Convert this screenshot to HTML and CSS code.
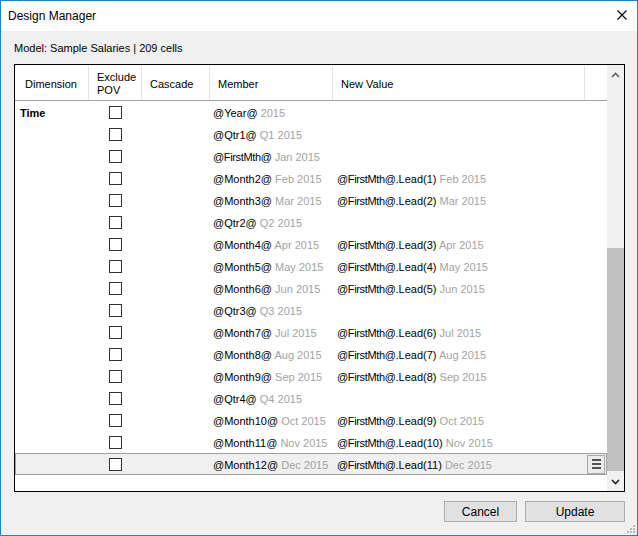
FILE: index.html
```html
<!DOCTYPE html>
<html>
<head>
<meta charset="utf-8">
<link rel="stylesheet" href="styles.css">
</head>
<body>
<div class="window">
  <div class="titlebar">
    <span class="title">Design Manager</span>
    <svg class="close" width="10" height="10" viewBox="0 0 10 10"><path d="M0.5 0.5L9.5 9.5M9.5 0.5L0.5 9.5" stroke="#000" stroke-width="1.1" fill="none"/></svg>
  </div>
  <div class="body">
    <div class="model">Model: Sample Salaries | 209 cells</div>
    <div class="gridbox">
      <div class="table">
        <div class="row head">
          <div class="hc c1">Dimension</div>
          <div class="hc c2">Exclude<br>POV</div>
          <div class="hc c3">Cascade</div>
          <div class="hc c4">Member</div>
          <div class="hc c5">New Value</div>
          <div class="hc c6"></div>
        </div>
        <div class="row"><div class="c1 dim">Time</div><div class="c2"><span class="cb"></span></div><div class="c3"></div><div class="c4">@Year@ <span class="g">2015</span></div><div class="c5"></div><div class="c6"></div></div>
        <div class="row"><div class="c1"></div><div class="c2"><span class="cb"></span></div><div class="c3"></div><div class="c4">@Qtr1@ <span class="g">Q1 2015</span></div><div class="c5"></div><div class="c6"></div></div>
        <div class="row"><div class="c1"></div><div class="c2"><span class="cb"></span></div><div class="c3"></div><div class="c4"><span class="fm">@FirstMth@</span> <span class="g">Jan 2015</span></div><div class="c5"></div><div class="c6"></div></div>
        <div class="row"><div class="c1"></div><div class="c2"><span class="cb"></span></div><div class="c3"></div><div class="c4">@Month2@ <span class="g">Feb 2015</span></div><div class="c5"><span class="fm">@FirstMth@</span>.Lead(1) <span class="g">Feb 2015</span></div><div class="c6"></div></div>
        <div class="row"><div class="c1"></div><div class="c2"><span class="cb"></span></div><div class="c3"></div><div class="c4">@Month3@ <span class="g">Mar 2015</span></div><div class="c5"><span class="fm">@FirstMth@</span>.Lead(2) <span class="g">Mar 2015</span></div><div class="c6"></div></div>
        <div class="row"><div class="c1"></div><div class="c2"><span class="cb"></span></div><div class="c3"></div><div class="c4">@Qtr2@ <span class="g">Q2 2015</span></div><div class="c5"></div><div class="c6"></div></div>
        <div class="row"><div class="c1"></div><div class="c2"><span class="cb"></span></div><div class="c3"></div><div class="c4">@Month4@ <span class="g">Apr 2015</span></div><div class="c5"><span class="fm">@FirstMth@</span>.Lead(3) <span class="g">Apr 2015</span></div><div class="c6"></div></div>
        <div class="row"><div class="c1"></div><div class="c2"><span class="cb"></span></div><div class="c3"></div><div class="c4">@Month5@ <span class="g">May 2015</span></div><div class="c5"><span class="fm">@FirstMth@</span>.Lead(4) <span class="g">May 2015</span></div><div class="c6"></div></div>
        <div class="row"><div class="c1"></div><div class="c2"><span class="cb"></span></div><div class="c3"></div><div class="c4">@Month6@ <span class="g">Jun 2015</span></div><div class="c5"><span class="fm">@FirstMth@</span>.Lead(5) <span class="g">Jun 2015</span></div><div class="c6"></div></div>
        <div class="row"><div class="c1"></div><div class="c2"><span class="cb"></span></div><div class="c3"></div><div class="c4">@Qtr3@ <span class="g">Q3 2015</span></div><div class="c5"></div><div class="c6"></div></div>
        <div class="row"><div class="c1"></div><div class="c2"><span class="cb"></span></div><div class="c3"></div><div class="c4">@Month7@ <span class="g">Jul 2015</span></div><div class="c5"><span class="fm">@FirstMth@</span>.Lead(6) <span class="g">Jul 2015</span></div><div class="c6"></div></div>
        <div class="row"><div class="c1"></div><div class="c2"><span class="cb"></span></div><div class="c3"></div><div class="c4">@Month8@ <span class="g">Aug 2015</span></div><div class="c5"><span class="fm">@FirstMth@</span>.Lead(7) <span class="g">Aug 2015</span></div><div class="c6"></div></div>
        <div class="row"><div class="c1"></div><div class="c2"><span class="cb"></span></div><div class="c3"></div><div class="c4">@Month9@ <span class="g">Sep 2015</span></div><div class="c5"><span class="fm">@FirstMth@</span>.Lead(8) <span class="g">Sep 2015</span></div><div class="c6"></div></div>
        <div class="row"><div class="c1"></div><div class="c2"><span class="cb"></span></div><div class="c3"></div><div class="c4">@Qtr4@ <span class="g">Q4 2015</span></div><div class="c5"></div><div class="c6"></div></div>
        <div class="row"><div class="c1"></div><div class="c2"><span class="cb"></span></div><div class="c3"></div><div class="c4">@Month10@ <span class="g">Oct 2015</span></div><div class="c5"><span class="fm">@FirstMth@</span>.Lead(9) <span class="g">Oct 2015</span></div><div class="c6"></div></div>
        <div class="row"><div class="c1"></div><div class="c2"><span class="cb"></span></div><div class="c3"></div><div class="c4">@Month11@ <span class="g">Nov 2015</span></div><div class="c5"><span class="fm">@FirstMth@</span>.Lead(10) <span class="g">Nov 2015</span></div><div class="c6"></div></div>
        <div class="row sel"><div class="c1"></div><div class="c2"><span class="cb"></span></div><div class="c3"></div><div class="c4">@Month12@ <span class="g">Dec 2015</span></div><div class="c5"><span class="fm">@FirstMth@</span>.Lead(11) <span class="g">Dec 2015</span></div><div class="c6"><span class="menubtn"><i></i><i></i><i></i></span></div></div>
      </div>
      <div class="scrollbar">
        <svg class="arrow" width="9" height="6" viewBox="0 0 9 6"><path d="M1 5L4.5 1.5L8 5" stroke="#606060" stroke-width="1.6" fill="none"/></svg>
        <div class="track"><div class="thumb"></div></div>
        <svg class="arrow" width="9" height="6" viewBox="0 0 9 6"><path d="M1 1L4.5 4.5L8 1" stroke="#202020" stroke-width="1.6" fill="none"/></svg>
      </div>
    </div>
    <div class="footer">
      <button class="btn cancel">Cancel</button>
      <button class="btn update">Update</button>
    </div>
  </div>
  <svg class="grip" width="10" height="10" viewBox="0 0 10 10">
    <rect x="7" y="1" width="2" height="2" fill="#b8b8b8"/>
    <rect x="4" y="4" width="2" height="2" fill="#b8b8b8"/>
    <rect x="7" y="4" width="2" height="2" fill="#b8b8b8"/>
    <rect x="1" y="7" width="2" height="2" fill="#b8b8b8"/>
    <rect x="4" y="7" width="2" height="2" fill="#b8b8b8"/>
    <rect x="7" y="7" width="2" height="2" fill="#b8b8b8"/>
  </svg>
</div>
</body>
</html>
```
FILE: styles.css
```css
* { box-sizing: border-box; }
html, body { margin: 0; padding: 0; }
body {
  width: 638px;
  height: 536px;
  overflow: hidden;
  font-family: "Liberation Sans", Arial, sans-serif;
  font-size: 11px;
  color: #000;
}
.window {
  position: relative;
  width: 638px;
  height: 536px;
  border: 1px solid #1883d7;
  background: #f0f0f0;
  display: flex;
  flex-direction: column;
}
.titlebar {
  height: 30px;
  background: #fff;
  display: flex;
  align-items: center;
  justify-content: space-between;
  padding: 0 10px 0 7px;
  flex: none;
}
.title {
  font-size: 12px;
  margin-top: -1px;
}
.close { margin-top: -2px; }
.body {
  padding: 0 12px 0 13px;
  display: flex;
  flex-direction: column;
}
.model {
  padding-top: 11px;
  height: 33px;
  line-height: 13px;
}
.gridbox {
  width: 611px;
  height: 428px;
  border: 1px solid #000;
  background: #fff;
  display: flex;
}
.table {
  width: 592px;
  display: flex;
  flex-direction: column;
}
.row {
  display: grid;
  grid-template-columns: 74px 53px 68px 123px 252px 22px;
  height: 22px;
  align-items: center;
  white-space: nowrap;
}
.row.head {
  height: 36px;
  border-bottom: 1px solid #a0a0a0;
  align-items: stretch;
}
.row.head .hc {
  border-right: 1px solid #e3e3e3;
  display: flex;
  align-items: center;
  justify-content: flex-start;
  padding: 3px 0 0 8px;
  line-height: 13px;
}
.row.head .hc.c1 { padding-left: 10px; }
.row.head .hc.c6 { border-right: none; }
.dim { font-weight: bold; padding-left: 5px; }
.c1, .c4, .c5 { padding-top: 2px; }
.c2 { display: flex; justify-content: center; }
.cb {
  display: block;
  width: 13px;
  height: 13px;
  border: 1px solid #333;
  background: #fff;
}
.c4 { padding-left: 3px; }
.c5 { padding-left: 4px; }
.fm { letter-spacing: -0.35px; }
.g { color: #a3a3a3; }
.row.sel {
  background: #f0f0f0;
  box-shadow: inset 0 0 0 1px #a0a0a0;
}
.c6 { display: flex; justify-content: flex-start; align-items: center; }
.menubtn {
  width: 18px;
  height: 19px;
  margin-left: 2px;
  border: 1px solid #a8a8a8;
  background: #ececec;
  display: flex;
  flex-direction: column;
  align-items: center;
  justify-content: center;
  gap: 2px;
}
.menubtn i {
  display: block;
  width: 9px;
  height: 2px;
  background: #505050;
}
.scrollbar {
  width: 17px;
  background: #f0f0f0;
  display: flex;
  flex-direction: column;
  align-items: center;
}
.scrollbar .arrow { flex: none; margin: 7px 0 6px; }
.track {
  flex: 1;
  width: 17px;
  display: flex;
  flex-direction: column;
  justify-content: flex-end;
}
.thumb {
  height: 223px;
  background: #c1c1c1;
  margin-bottom: 1px;
}
.footer {
  display: flex;
  justify-content: flex-end;
  gap: 8px;
  margin-top: 9px;
}
.btn {
  height: 21px;
  border: 1px solid #adadad;
  background: #e1e1e1;
  font-family: "Liberation Sans", Arial, sans-serif;
  font-size: 12px;
  color: #000;
  padding: 0;
}
.cancel { width: 73px; }
.update { width: 100px; }
.grip {
  position: absolute;
  right: 1px;
  bottom: 1px;
}
```
